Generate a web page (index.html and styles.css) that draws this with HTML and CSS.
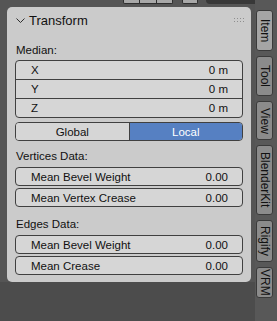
FILE: index.html
```html
<!DOCTYPE html>
<html>
<head>
<meta charset="utf-8">
<link rel="stylesheet" href="styles.css">
</head>
<body>
<div class="topbar">
  <div class="tb-group"><span class="tb-seg"></span><span class="tb-seg"></span><span class="tb-seg"></span></div>
  <div class="tb-btn"></div>
  <div class="tb-dark"></div>
</div>
<div class="main">
  <div class="region">
    <div class="panel">
      <div class="panel-header">
        <svg class="chevron" width="9" height="6" viewBox="0 0 9 6"><path d="M0.5 0.5 L4.5 4.5 L8.5 0.5" stroke="#2e2e2e" stroke-width="1" fill="none"/></svg>
        <span class="title">Transform</span>
        <svg class="grip" width="11" height="5" viewBox="0 0 11 5">
          <rect x="0" y="0" width="1" height="1"/><rect x="3" y="0" width="1" height="1"/><rect x="6" y="0" width="1" height="1"/><rect x="9" y="0" width="1" height="1"/>
          <rect x="0" y="3" width="1" height="1"/><rect x="3" y="3" width="1" height="1"/><rect x="6" y="3" width="1" height="1"/><rect x="9" y="3" width="1" height="1"/>
        </svg>
      </div>
      <div class="label label-median">Median:</div>
      <div class="col-box">
        <div class="num-row"><span>X</span><span>0 m</span></div>
        <div class="num-row"><span>Y</span><span>0 m</span></div>
        <div class="num-row"><span>Z</span><span>0 m</span></div>
      </div>
      <div class="toggle">
        <div class="toggle-item">Global</div>
        <div class="toggle-item active">Local</div>
      </div>
      <div class="label label-section">Vertices Data:</div>
      <div class="field"><span>Mean Bevel Weight</span><span>0.00</span></div>
      <div class="field"><span>Mean Vertex Crease</span><span>0.00</span></div>
      <div class="label label-section">Edges Data:</div>
      <div class="field"><span>Mean Bevel Weight</span><span>0.00</span></div>
      <div class="field"><span>Mean Crease</span><span>0.00</span></div>
    </div>
  </div>
  <div class="tabs">
    <div class="tab tab-active tab-item">Item</div>
    <div class="tab tab-tool">Tool</div>
    <div class="tab tab-view">View</div>
    <div class="tab tab-bk">BlenderKit</div>
    <div class="tab tab-rigify">Rigify</div>
    <div class="tab tab-vrm">VRM</div>
  </div>
</div>
</body>
</html>
```
FILE: styles.css
```css
* { box-sizing: border-box; }
html, body {
  margin: 0;
  padding: 0;
}
body {
  width: 277px;
  height: 321px;
  overflow: hidden;
  background: #4c4c4c;
  font-family: "Liberation Sans", Arial, sans-serif;
  color: #111111;
}
.topbar {
  height: 4px;
  display: flex;
  align-items: flex-end;
  padding-left: 123px;
  background: #555555;
}
.tb-group {
  display: flex;
  width: 50px;
  height: 4px;
  border: 1px solid #2e2e2e;
  border-top: none;
  border-radius: 0 0 2px 2px;
  background: #a8a8a8;
}
.tb-seg { flex: 1; border-right: 1px solid #2e2e2e; }
.tb-seg:last-child { border-right: none; }
.tb-btn {
  margin-left: 9px;
  width: 16px;
  height: 4px;
  border: 1px solid #2e2e2e;
  border-top: none;
  border-radius: 0 0 2px 2px;
  background: #a8a8a8;
}
.tb-dark {
  margin-left: 8px;
  width: 62px;
  height: 4px;
  border-radius: 0 0 4px 4px;
  background: #383838;
}
.main {
  display: flex;
  height: 317px;
}
.region {
  width: 255px;
  padding: 3px 0 0 7px;
  background: linear-gradient(#555555 0, #555555 278px, #4c4c4c 278px);
}
.panel {
  width: 244px;
  height: 275px;
  background: #cbcbcb;
  border-radius: 5px;
  padding: 0 8px;
}
.panel-header {
  height: 26px;
  display: flex;
  align-items: center;
  padding-left: 1px;
}
.chevron { margin-right: 4px; margin-top: 1px; }
.title { font-size: 13px; }
.grip { margin-left: auto; margin-right: -2px; margin-top: 1px; fill: #8e8e8e; }
.label {
  font-size: 11.5px;
  padding-left: 1px;
}
.label-median {
  height: 27px;
  padding-top: 8px;
  line-height: 19px;
}
.label-section {
  height: 26px;
  padding-top: 4px;
  line-height: 22px;
}
.col-box {
  border: 1px solid #404040;
  border-radius: 4px;
  background: #d6d6d6;
  overflow: hidden;
}
.num-row {
  height: 19px;
  display: flex;
  align-items: center;
  justify-content: space-between;
  padding: 0 14px 0 15px;
  font-size: 11.5px;
  border-top: 1px solid #404040;
}
.num-row:first-child { height: 18px; border-top: none; }
.toggle {
  margin-top: 4px;
  height: 19px;
  display: flex;
  border: 1px solid #404040;
  border-radius: 4px;
  overflow: hidden;
  font-size: 11.5px;
}
.toggle-item {
  flex: 1;
  display: flex;
  align-items: center;
  justify-content: center;
  background: #d6d6d6;
}
.toggle-item.active {
  background: #5680c2;
  color: #ffffff;
  border-left: 1px solid #404040;
}
.field {
  height: 19px;
  margin-bottom: 2px;
  display: flex;
  align-items: center;
  justify-content: space-between;
  padding: 0 14px 0 15px;
  border: 1px solid #404040;
  border-radius: 4px;
  background: #d6d6d6;
  font-size: 11.5px;
}
.tabs {
  flex: 1;
  background: #585858;
  padding: 10px 0 0 1px;
  display: flex;
  flex-direction: column;
  gap: 5px;
  margin-top: -4px;
}
.tab {
  width: 17px;
  writing-mode: vertical-rl;
  display: flex;
  align-items: center;
  justify-content: center;
  font-size: 12px;
  line-height: 15px;
  background: #8b8b8b;
  border: 1px solid #3a3a3a;
  border-radius: 3px;
  color: #111111;
}
.tab-active { background: #a5a5a5; }
.tab-item { height: 41px; }
.tab-tool { height: 40px; }
.tab-view { height: 39px; }
.tab-bk { height: 70px; }
.tab-rigify { height: 42px; }
.tab-vrm { height: 31px; }
```
